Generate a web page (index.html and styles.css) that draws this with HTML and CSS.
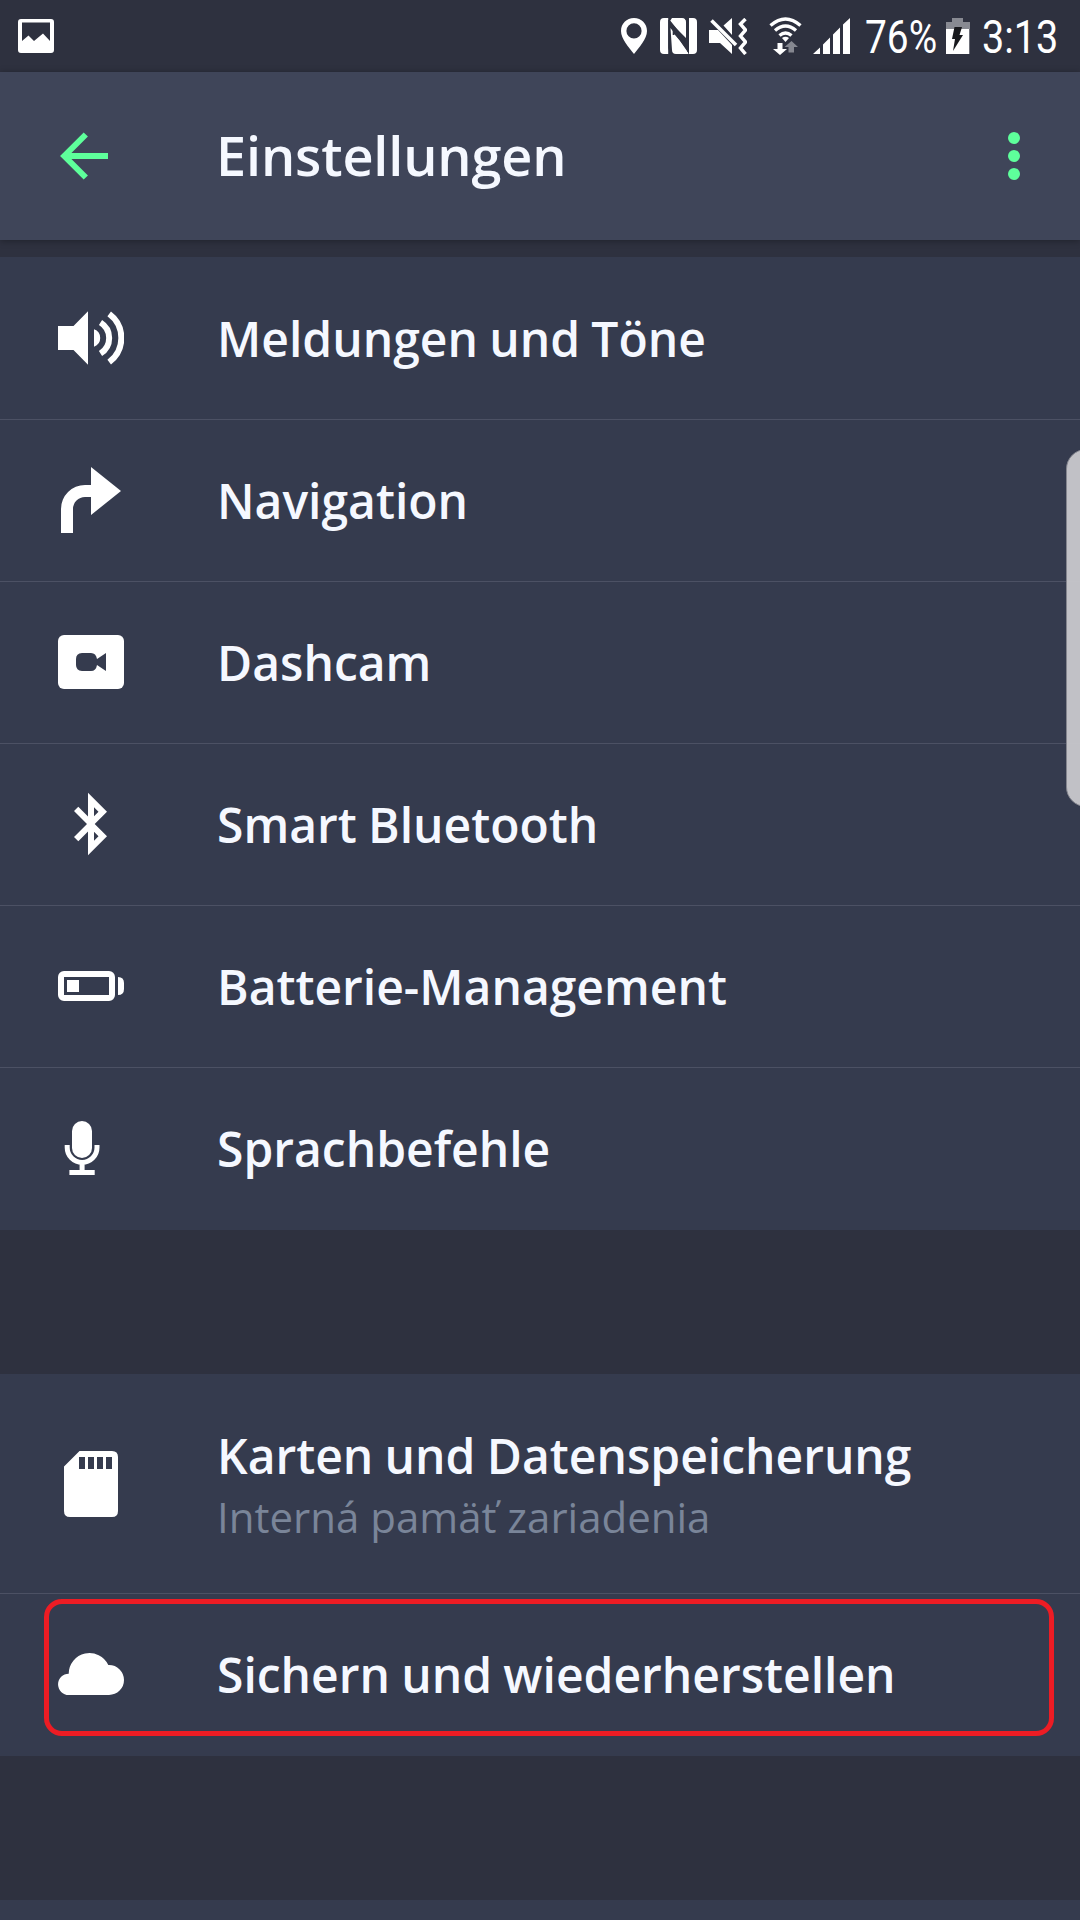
FILE: index.html
```html
<!DOCTYPE html>
<html lang="de">
<head>
<meta charset="utf-8">
<title>Einstellungen</title>
<link rel="stylesheet" href="styles.css">
</head>
<body>
<div class="screen">
  <div class="status">
    <svg class="photo" width="36" height="34" viewBox="0 0 36 34"><path fill="#fff" fill-rule="evenodd" d="M3 0H33Q36 0 36 3V31Q36 34 33 34H3Q0 34 0 31V3Q0 0 3 0ZM4 3.500V22L10.500 16.500 16 22 25 14.500 32 22V3.500Z"/></svg>
    <svg class="pin" width="26" height="36" viewBox="0 0 26 36"><path fill="#fff" fill-rule="evenodd" d="M13 0C5.500 0 0 5.600 0 13C0 21 8 29.500 13 36C18 29.500 26 21 26 13C26 5.600 20.500 0 13 0ZM13 5.300A7.600 7.600 0 1 1 13 20.500A7.600 7.600 0 1 1 13 5.300Z"/></svg>
    <svg class="nfc" width="37" height="36" viewBox="0 0 37 36"><path fill="#fff" d="M4 0H8.200V36H4Q0 36 0 32V4Q0 0 4 0ZM12 0H22Q26 0 26 4V20L14 8 10 3ZM10.500 10L27 32 28.500 36H16Q12 36 12 32ZM29 0H33Q37 0 37 4V32Q37 36 33 36H29Z"/><path fill="none" stroke="#2e313f" stroke-width="1.600" d="M9 2V30Q9.500 34 12 36M28 34V5Q27.500 2 25 0M9.500 6L28 33M13.500 17V14L24 26V21L9.500 3"/></svg>
    <svg class="mute" width="38" height="37" viewBox="0 0 38 37"><path fill="#fff" d="M0 12H9L23 27V36L11 25H0ZM14.500 7.500L23 0V17Z"/><path fill="none" stroke="#2e313f" stroke-width="2" d="M6 2L29 25"/><path fill="none" stroke="#fff" stroke-width="3.500" d="M2.500 2.500L27 27"/><path fill="none" stroke="#fff" stroke-width="3.500" d="M36.500 1L31.500 6 36.500 12 31.500 18 36.500 24 31.500 30 36.500 36"/></svg>
    <svg class="wifi" width="33" height="38" viewBox="0 0 33 38"><g fill="none" stroke="#fff" stroke-width="3.400"><path d="M1.500 8.500Q16.500-4.500 31.500 8.500M6 13.500Q16.500 4.500 27 13.500M10.500 18.500Q16.500 13.500 22.500 18.500"/></g><path fill="#fff" d="M13 21Q16.500 18.500 20 21L16.500 25ZM8.500 26H13.500V32H18L11 38 4 32H8.500Z"/><path fill="#858790" d="M19.500 35.500V30H15.500L22.500 24 29 30H25V35.500Z"/></svg>
    <svg class="signal" width="37" height="36" viewBox="0 0 37 36"><path fill="#fff" d="M0 36L7 29.500V36ZM10 26.500L17 19.500V36H10ZM20 16.500L27 9.500V36H20ZM30 6.500L37 0V36H30Z"/></svg>
    <span class="percent"><b>76%</b></span>
    <svg class="charge" width="24" height="36" viewBox="0 0 24 36"><path fill="#888a92" d="M6 0H17V4H24V11H0V4H6Z"/><path fill="#fff" d="M0 11H23.300V36H0Z"/><path fill="#18191d" d="M8.500 9H16L13.500 17H17L7 33 9 21H6Z"/></svg>
    <span class="clock"><b>3:13</b></span>
  </div>

  <header class="bar">
    <svg width="48" height="48" viewBox="0 0 48 48"><path fill="none" stroke="#5eff9b" stroke-width="6" d="M48 24H5M25.800 2.500L4.300 24 25.800 45.500"/></svg>
    <h1>Einstellungen</h1>
    <svg class="more" width="12" height="48" viewBox="0 0 12 48"><g fill="#5eff9b"><circle cx="6" cy="6" r="6"/><circle cx="6" cy="24" r="6"/><circle cx="6" cy="42" r="6"/></g></svg>
  </header>

  <main>
    <section class="group first">
      <div class="row">
        <svg class="icon" viewBox="0 0 66 66"><path fill="#fff" d="M0 21H15.500L30 6.300V59.700L15.500 45H0ZM36 24.300A9.200 9.200 0 0 1 36 41.700Z"/><path fill="none" stroke="#fff" stroke-width="6" d="M42.500 17.500A18.200 18.200 0 0 1 42.500 48.500M51.200 8.800A30.200 30.200 0 0 1 51.200 57.200"/></svg>
        <span class="label">Meldungen und Töne</span>
      </div>
      <div class="row">
        <svg class="icon" viewBox="0 0 66 66"><path fill="#fff" d="M3 66V42A24 24 0 0 1 27 18H33V0L63 24 33 48V30H27A12 12 0 0 0 15 42V66Z"/></svg>
        <span class="label">Navigation</span>
      </div>
      <div class="row">
        <svg class="icon" viewBox="0 0 66 66"><rect y="6" width="66" height="54" rx="6" fill="#fff"/><path fill="#353b4e" d="M24 24H33Q38 24 39 30L48 24V42L39 36Q38 42 33 42H24Q18 41.500 18 36V30Q18 24.500 24 24Z"/></svg>
        <span class="label">Dashcam</span>
      </div>
      <div class="row">
        <svg class="icon" viewBox="0 0 66 66"><path fill="#fff" fill-rule="evenodd" d="M30 1.700L49 20.700 36.700 33 49 45.300 30 64.300V40.600L20.300 50.300 16 46 29 33 16 20 20.300 15.700 30 25.400ZM36 16.200V25.200L40.500 20.700ZM36 40.800V49.800L40.500 45.300Z"/></svg>
        <span class="label">Smart Bluetooth</span>
      </div>
      <div class="row">
        <svg class="icon" viewBox="0 0 66 66"><rect x="3" y="21" width="51" height="24" rx="3" fill="none" stroke="#fff" stroke-width="6"/><path fill="#fff" d="M9 27H21V39H9ZM60 24Q66 24 66 30V36Q66 42 60 42Z"/></svg>
        <span class="label">Batterie-Management</span>
      </div>
      <div class="row">
        <svg class="icon" viewBox="0 0 66 66"><rect x="14" y="6" width="20" height="37" rx="10" fill="#fff"/><path fill="none" stroke="#fff" stroke-width="5" d="M9.200 30V32.500A14.900 15 0 0 0 39 32.500V30M24.100 47V57M11.400 57.400H36.700"/></svg>
        <span class="label">Sprachbefehle</span>
      </div>
    </section>

    <section class="group">
      <div class="row tall">
        <svg class="icon" viewBox="0 0 66 66"><path fill="#fff" fill-rule="evenodd" d="M21.500 0H54Q60 0 60 6V60Q60 66 54 66H12Q6 66 6 60V15.500ZM21 6V18H27V6ZM30 6V18H36V6ZM39 6V18H45V6ZM48 6V18H54V6Z"/></svg>
        <div class="text">
          <span class="label">Karten und Datenspeicherung</span>
          <span class="detail">Interná pamäť zariadenia</span>
        </div>
      </div>
      <div class="row marked">
        <svg class="icon" viewBox="0 0 66 66"><path fill="#fff" d="M10.700 54A10.650 10.650 0 0 1 10.700 32.700A20.800 20.800 0 0 1 50.300 24H51A15 15 0 0 1 51 54Z"/></svg>
        <span class="label">Sichern und wiederherstellen</span>
      </div>
    </section>

    <section class="group next"></section>
  </main>
  <div class="edge"></div>
</div>
</body>
</html>
```
FILE: styles.css
```css
*, *::after { box-sizing: border-box; }
body { margin: 0; font-family: "Open Sans", sans-serif; background: #2e313f; color: #f5f8ff; }
svg { display: block; flex: none; }
.screen { position: relative; width: 1080px; height: 1920px; overflow: hidden; background: #2e313f; }

.status { display: flex; align-items: flex-start; height: 72px; padding: 18px 22px 0 18px; color: #fff; }
.photo { margin-top: 1px; margin-right: auto; }
.nfc { margin-left: 13px; }
.mute { margin-left: 12px; }
.wifi { margin: -1px 0 0 22px; }
.signal { margin-left: 11px; }
.charge { margin-left: 10px; }
.percent, .clock { display: block; height: 36px; font-family: Roboto, sans-serif; font-size: 46px; line-height: 38px; white-space: nowrap; }
.percent { width: 71px; margin-left: 15px; }
.clock { width: 76px; margin-left: 12px; }
.percent b, .clock b { display: inline-block; font-weight: 400; transform-origin: 0 50%; transform: scaleX(.845); }
.clock b { transform: scaleX(.86); }

.bar { position: relative; display: flex; align-items: center; height: 168px; padding: 0 60px; background: #3f4559; box-shadow: 0 1px 7px rgba(0, 0, 0, .32); }
.bar h1 { margin: 0 0 2px 108px; font-size: 54px; font-weight: 600; line-height: 74px; letter-spacing: -.15px; }
.more { margin-left: auto; }

main { padding-top: 17px; }
.group { background: #353b4e; margin-bottom: 144px; }
.first { padding-top: 1px; }
.row { display: flex; align-items: flex-start; height: 162px; padding: 47px 58px 0; border-bottom: 1px solid #4c5164; }
.row:last-child { border-bottom: 0; }
.icon { width: 66px; height: 66px; }
.label { display: block; margin: 1px 0 0 93px; font-size: 48px; font-weight: 600; line-height: 66px; white-space: nowrap; word-spacing: -1.2px; }
.tall { height: 220px; padding-top: 77px; }
.text { margin: -28px 0 0 93px; }
.text .label { margin: 0; }
.detail { display: block; margin-top: -1px; font-size: 42px; line-height: 58px; color: #7a8599; }
.marked { position: relative; }
.marked::after { content: ""; position: absolute; left: 44px; top: 5px; width: 1010px; height: 137px; border: 5px solid #ed1c24; border-radius: 18px; }
.next { height: 20px; margin: 0; }
.edge { position: absolute; left: 1066px; top: 449px; width: 40px; height: 358px; border: 1px solid #85868f; border-radius: 22px; background: rgba(199, 199, 203, .96); }
```
